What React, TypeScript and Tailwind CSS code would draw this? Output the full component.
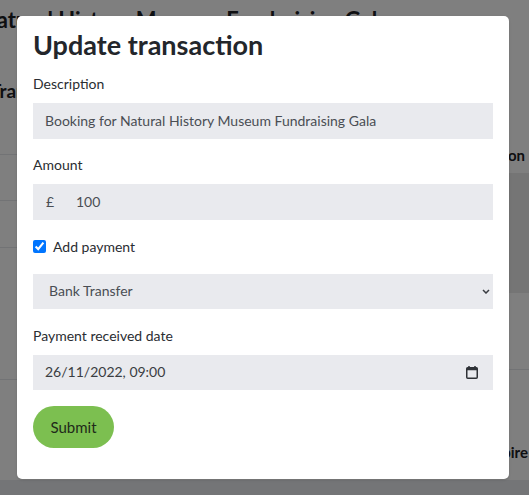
function Field({ label, children, className }: { label: string; children: React.ReactNode; className?: string }) {
  return (
    <div className={className}>
      <label className="block text-sm leading-5 text-[#2a2d32]">{label}</label>
      <div className="mt-[9px]">{children}</div>
    </div>
  );
}

function CalendarIcon() {
  return (
    <svg width="12" height="13" viewBox="0 0 12 13" className="text-[#2f3237]">
      <path d="M3 0v2.5M9 0v2.5" stroke="currentColor" strokeWidth="1.5" />
      <rect x="0.75" y="1.75" width="10.5" height="10.5" rx="1" fill="none" stroke="currentColor" strokeWidth="1.5" />
      <rect x="0.75" y="1.75" width="10.5" height="2.5" fill="currentColor" />
    </svg>
  );
}

export default function App() {
  return (
    <div className="relative h-[495px] w-[529px] overflow-hidden bg-white font-['Lato',sans-serif]">
      {/* page behind the dialog */}
      <div className="flex h-full flex-col">
        <h1 className="ml-[-20px] whitespace-nowrap pt-[7px] text-[22px] font-bold leading-[1.2] text-[#1d2024]">
          Natural History Museum Fundraising Gala
        </h1>
        <h2 className="ml-[-10px] mt-[46px] text-[19px] font-bold leading-6 text-[#1d2024]">Transactions</h2>
        <div className="mt-[20px] flex flex-1">
          <div className="flex w-[260px] flex-col">
            <div className="h-[32px] border-b border-[#e5e7eb]" />
            <div className="h-[46px] border-b border-[#e5e7eb]" />
            <div className="h-[47px] border-b border-[#e5e7eb]" />
            <div className="h-[132px] border-b border-[#e5e7eb]" />
          </div>
          <div className="flex flex-1 flex-col">
            <div className="h-[50px] pr-[4px] pt-[24px] text-right text-[15px] font-bold leading-4 text-[#1d2024]">Action</div>
            <div className="h-[120px] bg-[#ebebeb]" />
            <div className="h-[77px] border-b border-[#e5e7eb]" />
            <div className="whitespace-nowrap pr-[1px] pt-[71px] text-right text-[15px] font-bold text-[#1d2024]">Expire</div>
          </div>
        </div>
        <div className="h-[15px] bg-[#e9eaee]" />
      </div>

      {/* overlay */}
      <div className="absolute inset-0 bg-black/50" />

      {/* dialog */}
      <div className="absolute left-[17px] top-[16px] h-[463px] w-[492px] rounded-[5px] bg-white px-4 pt-3 shadow-sm">
        <h2 className="text-[27px] font-bold leading-[1.25] text-[#23262b]">Update transaction</h2>

        <Field label="Description" className="mt-3">
          <div className="flex h-9 items-center bg-[#e9eaee] px-3 text-sm text-[#4a4e54]">
            Booking for Natural History Museum Fundraising Gala
          </div>
        </Field>

        <Field label="Amount" className="mt-4">
          <div className="flex h-9 items-center bg-[#e9eaee] text-sm text-[#4a4e54]">
            <span className="w-[43px] pl-[13px]">£</span>
            <span>100</span>
          </div>
        </Field>

        <label className="mt-[17px] flex items-center gap-[7px] text-sm leading-5 text-[#2a2d32]">
          <input type="checkbox" defaultChecked className="m-0 h-[13px] w-[13px]" />
          Add payment
        </label>

        <div className="relative mt-[17px]">
          <select className="h-[35px] w-full appearance-none bg-[#e9eaee] pl-4 text-sm text-[#4a4e54] outline-none">
            <option>Bank Transfer</option>
          </select>
          <svg className="pointer-events-none absolute right-[3px] top-[15px]" width="8" height="5" viewBox="0 0 8 5">
            <path d="M1 1l3 3 3-3" fill="none" stroke="#3a3d42" strokeWidth="1.5" />
          </svg>
        </div>

        <Field label="Payment received date" className="mt-[17px]">
          <div className="flex h-[35px] items-center justify-between bg-[#e9eaee] pl-3 pr-[15px] text-sm text-[#3a3d42]">
            <span>26/11/2022, 09:00</span>
            <CalendarIcon />
          </div>
        </Field>

        <button className="mt-4 h-[42px] w-[81px] rounded-full bg-[#7cbf50] text-[15px] text-[#1f2a1a]">Submit</button>
      </div>
    </div>
  );
}
